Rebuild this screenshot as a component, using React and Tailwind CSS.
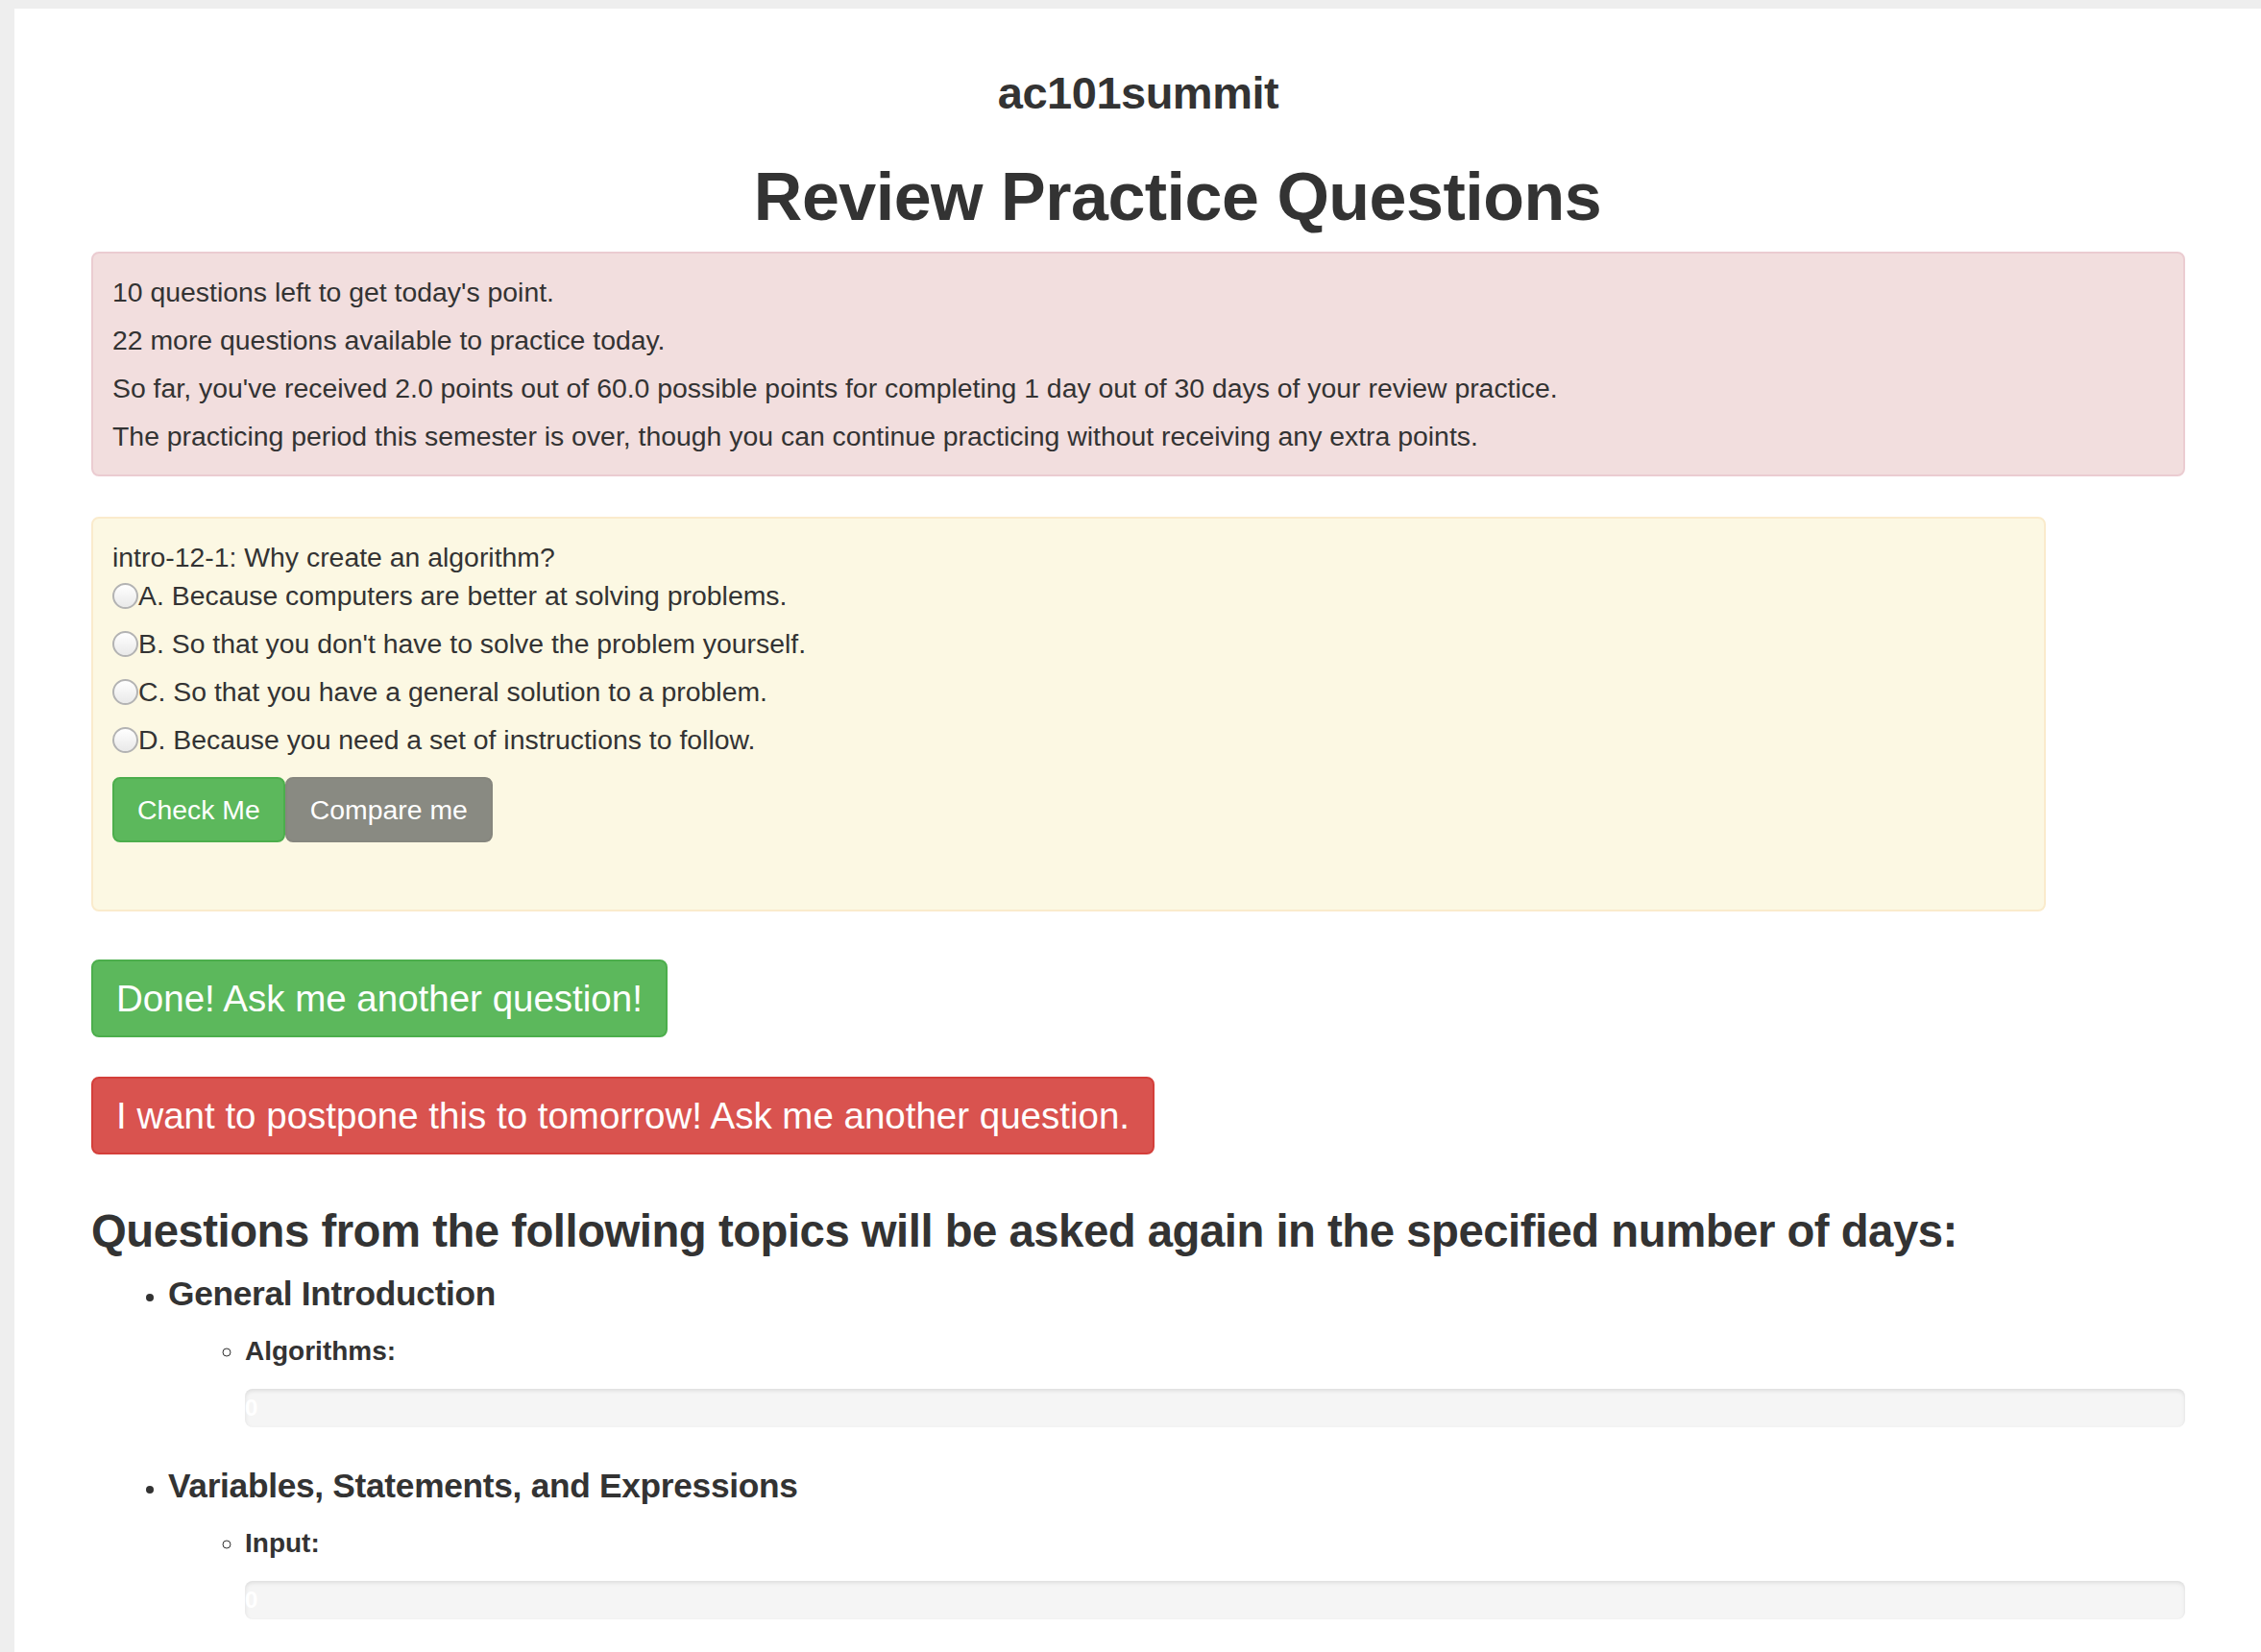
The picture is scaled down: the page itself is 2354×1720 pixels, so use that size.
const FONT = { fontFamily: '"Liberation Sans", Arial, Helvetica, sans-serif' }

const STATUS_LINES = [
  "10 questions left to get today's point.",
  '22 more questions available to practice today.',
  "So far, you've received 2.0 points out of 60.0 possible points for completing 1 day out of 30 days of your review practice.",
  'The practicing period this semester is over, though you can continue practicing without receiving any extra points.',
]

const OPTIONS = [
  'A. Because computers are better at solving problems.',
  "B. So that you don't have to solve the problem yourself.",
  'C. So that you have a general solution to a problem.',
  'D. Because you need a set of instructions to follow.',
]

const TOPICS = [
  { name: 'General Introduction', sub: 'Algorithms:' },
  { name: 'Variables, Statements, and Expressions', sub: 'Input:' },
]

function Radio() {
  return (
    <span className="inline-block w-[27px] h-[27px] shrink-0 rounded-full border-2 border-[#b3b3b3] bg-gradient-to-b from-white to-[#e9e9e9]" />
  )
}

function ProgressBar() {
  return (
    <div className="h-[40px] rounded-[8px] bg-[#f5f5f5] shadow-[inset_0_2px_4px_rgba(0,0,0,0.1)] flex items-center overflow-hidden">
      <span className="text-white text-[24px] font-bold leading-[40px]">0</span>
    </div>
  )
}

export default function App() {
  return (
    <div style={FONT} className="min-h-screen bg-[#eeeeee] pt-[9px] pl-[15px] text-[#333333]">
      <div className="bg-white min-h-[1711px] pl-[80px] pr-[79px] pt-[62px] pb-[40px]">
        {/* header */}
        <h3 className="text-center text-[47px] leading-[52px] font-bold tracking-[-0.5px]">ac101summit</h3>
        <h1 className="mt-[42px] pl-[82px] text-center text-[70px] leading-[80px] font-bold tracking-[-0.5px]">
          Review Practice Questions
        </h1>

        {/* status alert */}
        <div className="mt-[17px] border-2 border-[#ebccd1] bg-[#f2dede] rounded-[8px] px-[20px] py-[20px] flex flex-col gap-[10px] text-[28.4px] leading-[40px]">
          {STATUS_LINES.map(line => (
            <p key={line}>{line}</p>
          ))}
        </div>

        {/* question */}
        <div className="mt-[42px] w-[2035px] border-2 border-[#faebcc] bg-[#fcf8e3] rounded-[8px] pl-[20px] pr-[20px] pt-[20px] pb-[70px] text-[28.4px] leading-[40px]">
          <p>intro-12-1: Why create an algorithm?</p>
          <div className="flex flex-col gap-[10px]">
            {OPTIONS.map(opt => (
              <label key={opt} className="flex items-center">
                <Radio />
                <span>{opt}</span>
              </label>
            ))}
          </div>
          <div className="mt-[19px] flex">
            <button className="h-[68px] px-[24px] rounded-[8px] border-2 border-[#4cae4c] bg-[#5cb85c] text-white text-[28.4px]">
              Check Me
            </button>
            <button className="h-[68px] px-[24px] rounded-[8px] border-2 border-[#86867e] bg-[#898a82] text-white text-[28.4px]">
              Compare me
            </button>
          </div>
        </div>

        {/* actions */}
        <div className="mt-[50px] flex flex-col items-start gap-[41px]">
          <button className="h-[81px] px-[24px] rounded-[8px] border-2 border-[#4cae4c] bg-[#5cb85c] text-white text-[38.5px]">
            Done! Ask me another question!
          </button>
          <button className="h-[81px] px-[24px] rounded-[8px] border-2 border-[#d43f3a] bg-[#d9534f] text-white text-[38.5px]">
            I want to postpone this to tomorrow! Ask me another question.
          </button>
        </div>

        {/* topics */}
        <h3 className="mt-[54px] text-[47.3px] leading-[52px] font-bold tracking-[-0.5px]">
          Questions from the following topics will be asked again in the specified number of days:
        </h3>
        <ul className="mt-[19px] pl-[80px] list-disc text-[28px] leading-[40px]">
          {TOPICS.map((t, i) => (
            <li key={t.name} className={i > 0 ? 'mt-[41px]' : ''}>
              <div className="text-[35.3px] leading-[40px] font-bold tracking-[-0.3px]">{t.name}</div>
              <ul className="mt-[20px] pl-[80px] list-[circle]">
                <li className="text-[28px] leading-[40px] font-bold">{t.sub}</li>
              </ul>
              <div className="mt-[19px] ml-[80px]">
                <ProgressBar />
              </div>
            </li>
          ))}
        </ul>
      </div>
    </div>
  )
}
